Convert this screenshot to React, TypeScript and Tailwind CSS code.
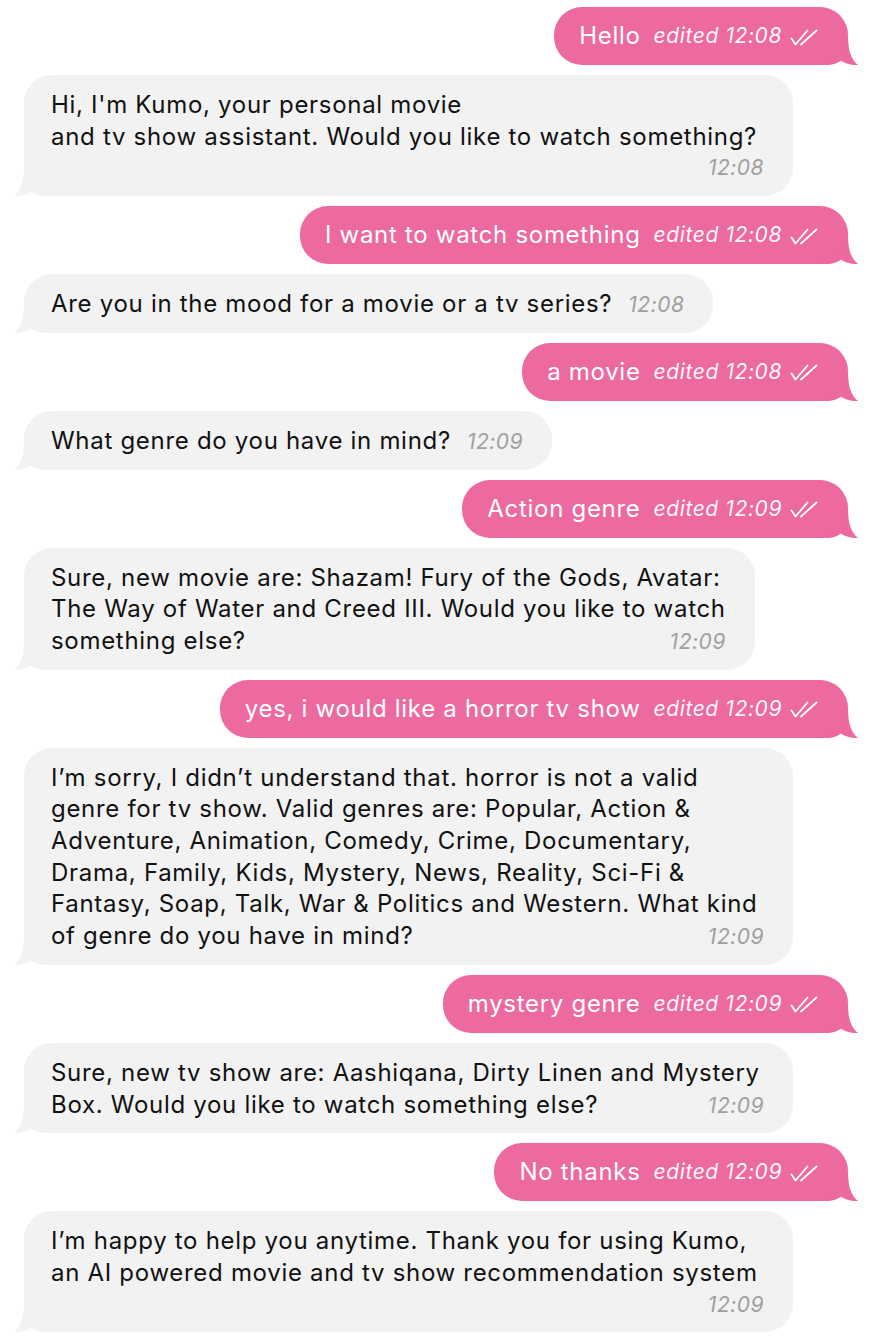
import React from "react";

type Msg =
  | { from: "me"; text: string; time: string }
  | { from: "bot"; lines: string[]; time: string; full?: boolean; timeOwnLine?: boolean };

const messages: Msg[] = [
  { from: "me", text: "Hello", time: "12:08" },
  {
    from: "bot",
    lines: ["Hi, I'm Kumo, your personal movie", "and tv show assistant. Would you like to watch something?"],
    time: "12:08",
    full: true,
    timeOwnLine: true,
  },
  { from: "me", text: "I want to watch something", time: "12:08" },
  { from: "bot", lines: ["Are you in the mood for a movie or a tv series?"], time: "12:08" },
  { from: "me", text: "a movie", time: "12:08" },
  { from: "bot", lines: ["What genre do you have in mind?"], time: "12:09" },
  { from: "me", text: "Action genre", time: "12:09" },
  {
    from: "bot",
    lines: [
      "Sure, new movie are: Shazam! Fury of the Gods, Avatar:",
      "The Way of Water and Creed III. Would you like to watch",
      "something else?",
    ],
    time: "12:09",
  },
  { from: "me", text: "yes, i would like a horror tv show", time: "12:09" },
  {
    from: "bot",
    lines: [
      "I’m sorry, I didn’t understand that. horror is not a valid",
      "genre for tv show. Valid genres are: Popular, Action &",
      "Adventure, Animation, Comedy, Crime, Documentary,",
      "Drama, Family, Kids, Mystery, News, Reality, Sci-Fi &",
      "Fantasy, Soap, Talk, War & Politics and Western. What kind",
      "of genre do you have in mind?",
    ],
    time: "12:09",
    full: true,
  },
  { from: "me", text: "mystery genre", time: "12:09" },
  {
    from: "bot",
    lines: ["Sure, new tv show are: Aashiqana, Dirty Linen and Mystery", "Box. Would you like to watch something else?"],
    time: "12:09",
    full: true,
  },
  { from: "me", text: "No thanks", time: "12:09" },
  {
    from: "bot",
    lines: [
      "I’m happy to help you anytime. Thank you for using Kumo,",
      "an AI powered movie and tv show recommendation system",
    ],
    time: "12:09",
    full: true,
    timeOwnLine: true,
  },
];

function Tail({ side, color }: { side: "left" | "right"; color: string }) {
  return (
    <svg
      width="40"
      height="30"
      viewBox="0 0 40 30"
      className={side === "right" ? "absolute bottom-0 right-[-12px]" : "absolute bottom-0 left-[-12px] -scale-x-100"}
    >
      <path
        d="M28 0 C28 16, 31 24, 38 30 C32 30.5, 25 28.5, 21 25.5 C18 28, 13 30, 6 30 L0 30 L0 0 Z"
        fill={color}
      />
    </svg>
  );
}

function DoubleCheck() {
  return (
    <svg width="28" height="17" viewBox="0 0 28 17" fill="none" className="ml-2 self-center translate-y-[1px]">
      <path d="M1.5 9.5 L5.5 15.5 L17.5 1.5" stroke="white" strokeWidth="1.8" strokeLinecap="round" strokeLinejoin="round" />
      <path d="M11 15.5 L26.5 1.5" stroke="white" strokeWidth="1.8" strokeLinecap="round" />
    </svg>
  );
}

function Outgoing({ text, time }: { text: string; time: string }) {
  return (
    <div className="flex justify-end pr-[22px]">
      <div className="relative">
        <Tail side="right" color="#EC6A9F" />
        <div className="relative flex h-[58px] items-center rounded-[28px] bg-[#EC6A9F] pl-[25px] pr-[30px] text-white">
          <span className="text-[24px] leading-[32px] tracking-[0.7px]">{text}</span>
          <span className="ml-[13px] text-[21px] italic leading-[32px] tracking-[0.6px] text-white/95">
            edited {time}
          </span>
          <DoubleCheck />
        </div>
      </div>
    </div>
  );
}

function Incoming({ m }: { m: Extract<Msg, { from: "bot" }> }) {
  const last = m.lines.length - 1;
  return (
    <div className="flex justify-start pl-[24px]">
      <div className="relative">
        <Tail side="left" color="#F2F2F2" />
        <div
          className={
            "relative rounded-[28px] bg-[#F2F2F2] pb-[12px] pl-[27px] pr-[29px] pt-[14px] text-[24px] leading-[31.7px] tracking-[0.7px] text-[#111] " +
            (m.full ? "w-[769px]" : "")
          }
        >
          {m.lines.map((line, i) =>
            i === last && !m.timeOwnLine ? (
              <div key={i} className="flex items-baseline whitespace-nowrap">
                <span>{line}</span>
                <span className="ml-auto pl-[16px] text-[21px] italic tracking-[0.5px] text-[#A0A0A0]">{m.time}</span>
              </div>
            ) : (
              <div key={i} className="whitespace-nowrap">
                {line}
              </div>
            )
          )}
          {m.timeOwnLine && (
            <div className="text-right text-[21px] italic leading-[31.7px] tracking-[0.5px] text-[#A0A0A0]">
              {m.time}
            </div>
          )}
        </div>
      </div>
    </div>
  );
}

export default function App() {
  return (
    <div className="min-h-[1342px] bg-white pt-[7px] font-['Inter',sans-serif] antialiased">
      <div className="flex flex-col gap-[10px]">
        {messages.map((m, i) =>
          m.from === "me" ? <Outgoing key={i} text={m.text} time={m.time} /> : <Incoming key={i} m={m} />
        )}
      </div>
    </div>
  );
}
